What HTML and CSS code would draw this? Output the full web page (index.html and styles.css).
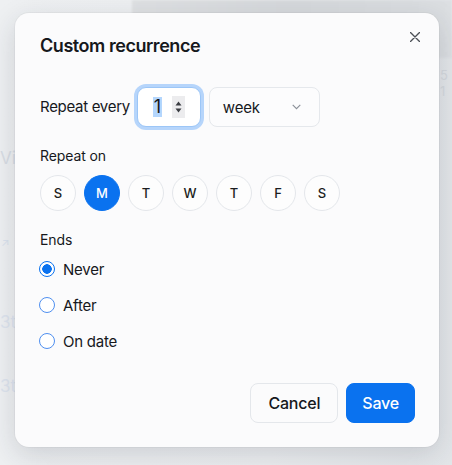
FILE: index.html
```html
<!DOCTYPE html>
<html lang="en">
<head>
<meta charset="utf-8">
<title>Custom recurrence</title>
<link rel="stylesheet" href="styles.css">
</head>
<body>
<div class="backdrop">
  <div class="bg-image"></div>
  <span class="bg-text bg-vi">Vi</span>
  <span class="bg-text bg-ext">↗</span>
  <span class="bg-text bg-t1">3tl</span>
  <span class="bg-text bg-t2">3tl</span>
  <span class="bg-text bg-r">5 1</span>
</div>

<div class="modal" role="dialog" aria-labelledby="dlg-title">
  <button class="close" aria-label="Close">
    <svg width="10" height="10" viewBox="0 0 10 10"><path d="M0.5 0.5 L9.5 9.5 M9.5 0.5 L0.5 9.5" stroke="#4b4f56" stroke-width="1.4" fill="none" stroke-linecap="round"/></svg>
  </button>
  <h2 class="title" id="dlg-title">Custom recurrence</h2>

  <div class="repeat-row">
    <span class="repeat-label">Repeat every</span>
    <div class="num-input">
      <span class="num-value"><span class="sel">1</span></span>
      <span class="spinner">
        <svg width="7" height="14" viewBox="0 0 7 14"><path d="M3.5 1.5 L6.5 5.5 L0.5 5.5 Z M3.5 12.5 L6.5 8.5 L0.5 8.5 Z" fill="#3a3d42"/></svg>
      </span>
    </div>
    <div class="select">
      <span>week</span>
      <svg width="9" height="6" viewBox="0 0 9 6"><path d="M0.7 0.8 L4.5 4.6 L8.3 0.8" stroke="#8b9098" stroke-width="1.1" fill="none"/></svg>
    </div>
  </div>

  <div class="section-label repeat-on">Repeat on</div>
  <div class="days">
    <span class="day">S</span>
    <span class="day active">M</span>
    <span class="day">T</span>
    <span class="day">W</span>
    <span class="day">T</span>
    <span class="day">F</span>
    <span class="day">S</span>
  </div>

  <div class="section-label ends">Ends</div>
  <div class="radios">
    <label class="radio-row"><span class="radio checked"></span><span>Never</span></label>
    <label class="radio-row"><span class="radio"></span><span>After</span></label>
    <label class="radio-row"><span class="radio"></span><span>On date</span></label>
  </div>

  <div class="footer">
    <button class="btn btn-cancel">Cancel</button>
    <button class="btn btn-save">Save</button>
  </div>
</div>
</body>
</html>
```
FILE: styles.css
```css
* { box-sizing: border-box; }
html, body { margin: 0; padding: 0; }
body {
  width: 452px;
  height: 465px;
  overflow: hidden;
  background: #eceef0;
  font-family: Inter, "Liberation Sans", sans-serif;
  color: #16181c;
  position: relative;
}

.backdrop {
  position: absolute;
  inset: 0;
  background: linear-gradient(90deg, #eef0f2 0%, #eceef0 60%, #e3e6e9 100%);
}
.bg-image {
  position: absolute;
  left: 132px;
  top: 0;
  width: 320px;
  height: 58px;
  background: linear-gradient(90deg, #dfe1e3 0%, #d6d9dc 50%, #dcdfe2 100%);
  filter: blur(1px);
}
.bg-text {
  position: absolute;
  color: #d8dde4;
  font-size: 17px;
  font-family: Inter, sans-serif;
}
.bg-vi { left: 0; top: 148px; }
.bg-ext { left: 1px; top: 236px; font-size: 11px; color: #d9e2ee; }
.bg-t1 { left: 0; top: 312px; color: #dde4ee; }
.bg-t2 { left: 0; top: 376px; color: #dde4ee; }
.bg-r { left: 440px; top: 67px; font-size: 13px; color: #d5d9de; }

.modal {
  position: absolute;
  left: 15px;
  top: 13px;
  width: 424px;
  height: 434px;
  background: #fbfbfc;
  border-radius: 14px;
  box-shadow: 0 8px 28px rgba(30, 40, 55, 0.16), 0 0 0 1px rgba(0, 0, 0, 0.03);
  padding: 21px 24px 24px 25px;
  display: flex;
  flex-direction: column;
}

.close {
  position: absolute;
  top: 19px;
  right: 19px;
  width: 10px;
  height: 10px;
  padding: 0;
  border: 0;
  background: none;
  display: block;
}
.close svg { display: block; }

.title {
  margin: 0;
  font-size: 18px;
  line-height: 24px;
  font-weight: 600;
  letter-spacing: -0.45px;
}

.repeat-row {
  margin-top: 29px;
  display: flex;
  align-items: center;
  gap: 8px;
  height: 40px;
}
.repeat-label {
  font-size: 15px;
  line-height: 20px;
  letter-spacing: -0.3px;
  margin-right: -1px;
}
.num-input {
  width: 64px;
  height: 40px;
  border: 1px solid #9cc6f7;
  border-radius: 9px;
  box-shadow: 0 0 0 3px #b6d5fb;
  background: #fff;
  display: flex;
  align-items: center;
  padding-left: 15px;
  gap: 10px;
}
.num-value {
  font-size: 18px;
  line-height: 20px;
}
.sel {
  background: #b4d6fd;
  display: inline-block;
  padding: 0 1px;
}
.spinner {
  width: 13px;
  height: 22px;
  background: #ececee;
  display: flex;
  align-items: center;
  justify-content: center;
}
.spinner svg { display: block; }
.select {
  width: 111px;
  height: 40px;
  border: 1px solid #e5e8ec;
  border-radius: 8px;
  background: #fcfcfd;
  display: flex;
  align-items: center;
  justify-content: space-between;
  padding: 0 18px 0 13px;
  font-size: 15px;
  letter-spacing: -0.2px;
}
.select svg { display: block; }

.section-label {
  font-size: 14px;
  line-height: 20px;
  letter-spacing: -0.1px;
}
.repeat-on { margin-top: 19px; }
.ends { margin-top: 19px; }

.days {
  margin-top: 9px;
  display: flex;
  gap: 8px;
}
.day {
  width: 36px;
  height: 36px;
  border-radius: 50%;
  border: 1px solid #e4e7eb;
  background: #fdfdfd;
  display: flex;
  align-items: center;
  justify-content: center;
  font-size: 13px;
  font-weight: 500;
  color: #1b1d21;
}
.day.active {
  background: #0a72ef;
  border-color: #0a72ef;
  color: #fff;
}

.radios {
  margin-top: 7px;
  display: flex;
  flex-direction: column;
  gap: 12px;
}
.radio-row {
  display: flex;
  align-items: center;
  gap: 8px;
  height: 24px;
  font-size: 15px;
  letter-spacing: -0.25px;
}
.radio {
  width: 16px;
  height: 16px;
  border-radius: 50%;
  border: 1.2px solid #4f8ff0;
  background: #fff;
  margin-left: -1px;
}
.radio.checked {
  border: 1.5px solid #0a72ef;
  background: radial-gradient(circle, #0a72ef 0 4.5px, #fff 5px);
}

.footer {
  margin-top: auto;
  display: flex;
  justify-content: flex-end;
  gap: 8px;
}
.btn {
  height: 40px;
  border-radius: 8px;
  font-family: Inter, "Liberation Sans", sans-serif;
  font-size: 16px;
  font-weight: 500;
  letter-spacing: -0.2px;
  padding: 0 15px;
}
.btn-cancel {
  background: #fbfbfc;
  border: 1px solid #e4e7eb;
  color: #16181c;
  padding: 0 17px;
}
.btn-save {
  background: #0a72ef;
  border: 1px solid #0a72ef;
  color: #fff;
}
```
